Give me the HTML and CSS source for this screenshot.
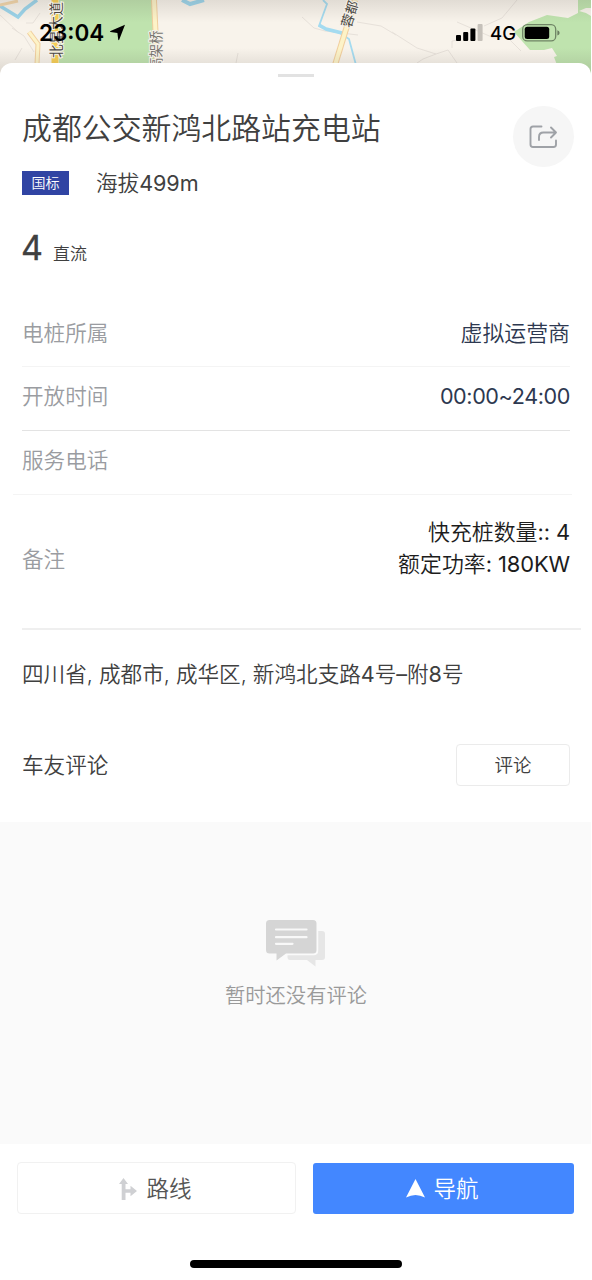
FILE: index.html
```html
<!DOCTYPE html>
<html lang="zh-CN">
<head>
<meta charset="utf-8">
<title>成都公交新鸿北路站充电站</title>
<link rel="stylesheet" href="styles.css">
</head>
<body>
<div class="screen">
  <header class="top">
    <svg class="map" width="591" height="80" viewBox="0 0 591 80">
      <defs>
        <linearGradient id="shade" x1="0" y1="0" x2="0" y2="1">
          <stop offset="0" stop-color="#554e48" stop-opacity=".14"/>
          <stop offset=".28" stop-color="#554e48" stop-opacity="0"/>
          <stop offset=".6" stop-color="#554e48" stop-opacity="0"/>
          <stop offset=".8" stop-color="#554e48" stop-opacity=".11"/>
          <stop offset="1" stop-color="#554e48" stop-opacity=".2"/>
        </linearGradient>
      </defs>
      <rect width="591" height="80" fill="#f8f3eb"/>
      <path d="M59 0H152L156 80H59Z" fill="#bfe3ae"/>
      <path d="M514 32L529 22 547 15 568 18 578 13 578 0H591V80H558L557 65 554 57 557 56 552 48 544 50H530Z" fill="#bfe3ae"/>
      <path d="M579 11L586 8 591 8V16L586 13Z" fill="#f8f3eb"/>
      <g fill="none" stroke="#e7e1da" stroke-width="1">
        <path d="M12 28L24 36 34 52M22 48L15 60M0 15L19 33M26 23H33L40 13M302 17L314 28 325 31 358 35M357 22L381 26 396 35M392 32L417 48 436 54 448 50 457 63M436 54L423 59 417 63M452 48V41L458 40M457 22L494 38 506 36 521 51M484 26L502 18 517 0M238 53L236 63"/>
      </g>
      <path d="M0 6L18 17 25 9 37 0" fill="none" stroke="#9bd4ea" stroke-width="3.5"/>
      <path d="M182 0L190 4 204 0" fill="none" stroke="#9bd4ea" stroke-width="4"/>
      <path d="M323 0L327 4 319 26 328 30 340 33 349 39 356 65" fill="none" stroke="#a4dbf0" stroke-width="1.8"/>
      <path d="M319 25L326 29 342 33" fill="none" stroke="#a4dbf0" stroke-width="3.5"/>
      <path d="M0 5L18 1" stroke="#f3d6aa" stroke-width="3"/>
      <path d="M29 32L38 44 37 64" fill="none" stroke="#f1cf9e" stroke-width="5"/>
      <path d="M29 32L38 44 37 64" fill="none" stroke="#fdf3c8" stroke-width="3"/>
      <path d="M55 0V80" stroke="#f7ce55" stroke-width="7"/>
      <path d="M154 0L157 64" stroke="#f1cf9e" stroke-width="6"/>
      <path d="M154 0L157 64" stroke="#fdf3c8" stroke-width="4"/>
      <path d="M355 0L335 65" stroke="#f1cf9e" stroke-width="6"/>
      <path d="M355 0L335 65" stroke="#fdf3c8" stroke-width="4"/>
      <rect width="591" height="80" fill="url(#shade)"/>
      <text class="road" transform="translate(61 58) rotate(-90)" textLength="56">北星大道</text>
      <text class="road road-soft" transform="translate(160.500 71) rotate(-90)">高架桥</text>
      <text class="road" transform="translate(350.500 28.500) rotate(-73)">蓉都</text>
    </svg>
    <div class="status">
      <span class="clock">23:04</span>
      <svg class="locate" width="17" height="17" viewBox="0 0 17 17"><path d="M16 .8L10.300 15.600Q9.700 16.700 9.200 15.500L8.400 8.900 1.600 8Q.2 7.600 1.500 7Z"/></svg>
      <svg class="signal" width="27" height="18" viewBox="0 0 27 18"><rect y="11" width="5" height="6" rx="1"/><rect x="7.200" y="8" width="5" height="9" rx="1"/><rect x="14.400" y="4.500" width="5" height="12.500" rx="1"/><rect x="21.600" width="5" height="17" rx="1" fill="#c6c1ba"/></svg>
      <span class="net">4G</span>
      <svg class="battery" width="38" height="18" viewBox="0 0 38 18"><rect x=".7" y=".7" width="33" height="16.200" rx="4.500" fill="none" stroke="#000" stroke-opacity=".42" stroke-width="1.300"/><rect x="2.700" y="2.700" width="24.500" height="12.300" rx="2.500"/><path d="M35.400 6.200Q37.600 7 37.600 8.900T35.400 11.600Z" fill-opacity=".45"/></svg>
    </div>
  </header>

  <main class="sheet">
    <div class="grip"></div>
    <section class="summary">
      <div class="info">
        <h1 class="name">成都公交新鸿北路站充电站</h1>
        <div class="meta"><span class="tag">国标</span><span class="altitude">海拔<span class="latin">499m</span></span></div>
        <div class="count"><span class="num">4</span><span class="kind">直流</span></div>
      </div>
      <button class="share" aria-label="分享">
        <svg width="29" height="24" viewBox="0 0 29 24" fill="none" stroke="#9fa2a7" stroke-width="1.900" stroke-linecap="round" stroke-linejoin="round"><path d="M12.500 1.500H4Q1.500 1.500 1.500 4V19.500Q1.500 22 4 22H24.500Q27 22 27 19.500V15.500"/><path d="M10 15V12Q10 7.500 14.500 7.500H27M22 2.500L27 7.500 22 12.500"/></svg>
      </button>
    </section>

    <dl class="details">
      <div class="row"><dt>电桩所属</dt><dd>虚拟运营商</dd></div>
      <div class="row row-dark"><dt>开放时间</dt><dd class="hours">00:00~24:00</dd></div>
      <div class="row row-wide"><dt>服务电话</dt><dd></dd></div>
      <div class="row row-note"><dt>备注</dt><dd>快充桩数量<span class="latin">:: 4</span><br>额定功率<span class="latin">: 180KW</span></dd></div>
    </dl>
    <p class="address">四川省, 成都市, 成华区, 新鸿北支路<span class="latin">4</span>号<span class="latin">–</span>附<span class="latin">8</span>号</p>
    <section class="comments"><h2>车友评论</h2><button class="comment-btn">评论</button></section>
    <section class="empty">
      <svg width="60" height="48" viewBox="0 0 60 48"><path d="M21 11H56Q59 11 59 14V37Q59 40 56 40H49.500V46.500L41 40H24Q21.500 40 21.500 37Z" fill="#e6e6e6"/><path d="M4 0H47.500Q51 0 51 3.500V30.500Q51 34 47.500 34H20" fill="none" stroke="#fafafa" stroke-width="2.500"/><path d="M3.500 0H47Q50.500 0 50.500 3.500V30Q50.500 33.500 47 33.500H20L10.500 40.500V33.500H3.500Q0 33.500 0 30V3.500Q0 0 3.500 0Z" fill="#d5d5d5"/><path d="M10 9.500H40.500M10 17.200H40.500M10 23.800H26.500" stroke="#f8f8f8" stroke-width="2.200" stroke-linecap="round"/></svg>
      <p>暂时还没有评论</p>
    </section>
    <footer class="actions">
      <button class="action route"><svg width="18" height="22" viewBox="0 0 18 22"><path d="M4.500 0L9 6H6.500V11.300H11.500V7.800L18 13 11.500 18.200V14.700H6.500V22H2.700V6H0Z" fill="#cfd0d3"/></svg>路线</button>
      <button class="action nav"><svg width="19" height="19" viewBox="0 0 19 19"><path d="M9.500 0L19 18.600Q9.500 13.500 0 18.600Z" fill="#fff"/></svg>导航</button>
    </footer>
    <div class="home"></div>
  </main>
</div>
</body>
</html>
```
FILE: styles.css
```css
* { box-sizing: border-box; margin: 0; padding: 0; }
body { background: #fff; color: #404040; font: 350 21.600px/32px Inter, "Noto Sans CJK SC DemiLight", "Noto Sans CJK SC", sans-serif; }
button { font: inherit; color: inherit; border: 0; background: none; }
.screen { width: 591px; height: 1280px; overflow: hidden; }
.latin { font-weight: 400; letter-spacing: -.1px; }

.top { position: relative; height: 63px; }
.map { display: block; }
.road { font: 400 13.500px "Noto Sans CJK SC", sans-serif; fill: #4c4943; stroke: #f5f1ea; stroke-width: 2px; paint-order: stroke; }
.road-soft { fill: #77756f; }
.status { position: absolute; inset: 0; display: flex; align-items: center; padding: 2px 31px 0 39px; }
.clock { font-size: 22.500px; font-weight: 600; color: #000; width: 66px; white-space: nowrap; }
.locate { margin-left: 4px; }
.signal { margin-left: auto; }
.net { font-size: 18.500px; font-weight: 500; color: #000; width: 26px; margin: 0 6px 0 7px; }

.sheet { position: relative; height: 1217px; background: #fff; border-radius: 12px 12px 0 0; display: flex; flex-direction: column; }
.grip { width: 36px; height: 3px; margin: 11px auto 0 278px; background: #e2e2e2; flex: none; }
.summary { display: flex; justify-content: space-between; height: 223px; padding: 29px 17px 0 22px; flex: none; }
.name { font-size: 29.900px; font-weight: 350; line-height: 44px; white-space: nowrap; }
.meta { display: flex; align-items: center; margin-top: 17px; height: 32px; }
.tag { width: 47px; height: 24px; background: #3044a3; color: #fff; font-size: 14px; line-height: 24px; text-align: center; }
.altitude { margin-left: 27px; }
.count { display: flex; align-items: baseline; margin-top: 27px; line-height: 44px; }
.num { font-size: 34px; font-weight: 400; width: 31px; margin-left: -1px; margin-right: 1px; -webkit-text-stroke: .3px #404040; }
.kind { font-size: 17px; }
.share { width: 61px; height: 61px; border-radius: 50%; background: #f6f6f6; display: flex; align-items: center; justify-content: center; }

.row { display: flex; justify-content: space-between; align-items: center; height: 64px; margin: 0 21px 0 22px; padding-bottom: 5px; border-bottom: 1px solid #f4f4f4; }
.row dt { color: #9a9ca1; }
.row dd { color: #2d3850; text-align: right; font-size: 21.900px; }
.row .hours { font-size: 21.600px; font-weight: 400; letter-spacing: -.400px; }
.row:first-child { height: 67px; padding-bottom: 1px; }
.row-dark { border-bottom-color: #e3e3e3; }
.row-wide { margin: 0 19px 0 13px; padding-left: 9px; }
.row-note { height: 135px; margin-right: 10px; padding: 0 11px 0 0; border-bottom: 2px solid #efefef; }
.row-note dt { margin-top: -6px; }
.row-note dd { color: #1c1c1c; margin-top: -26px; line-height: 31.500px; }
.address { padding: 28px 22px 0; height: 105px; white-space: nowrap; }
.comments { display: flex; align-items: center; justify-content: space-between; height: 60px; padding: 0 21px 0 22px; }
.comments h2 { font-size: 21.600px; font-weight: 350; }
.comment-btn { width: 114px; height: 42px; border: 1px solid #ebebeb; border-radius: 4px; font-size: 18.500px; }
.empty { margin-top: 27px; height: 322px; background: #fafafa; display: flex; flex-direction: column; align-items: center; padding: 98px 0 0 1px; color: #999; font-size: 20.300px; flex: none; }
.empty p { margin-top: 12px; }
.actions { display: flex; gap: 17px; padding: 18px 17px 0; flex: none; }
.action { height: 52px; border-radius: 4px; display: flex; align-items: center; justify-content: center; gap: 9px; font-size: 22.500px; }
.route { width: 279px; border: 1px solid #f1f1f1; color: #555; padding: 1px 2px 0 0; }
.nav { width: 261px; height: 51px; margin-top: 1px; background: #4387ff; color: #fff; gap: 8px; border-radius: 3px; padding-right: 2px; }
.home { width: 212px; height: 8px; border-radius: 4px; background: #000; margin: 46px 0 0 190px; flex: none; }
```
